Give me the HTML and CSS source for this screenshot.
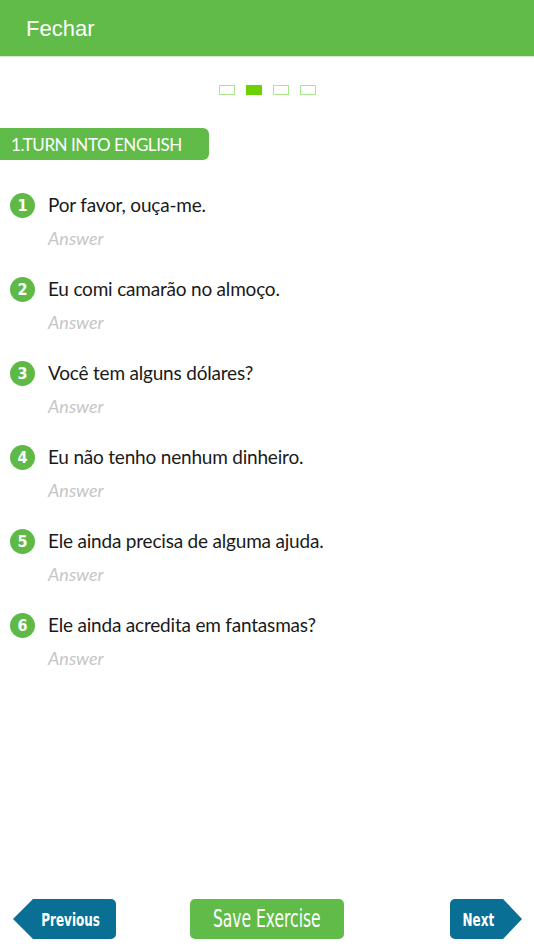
FILE: index.html
```html
<!DOCTYPE html>
<html lang="pt">
<head>
<meta charset="utf-8">
<title>Exercise</title>
<link rel="stylesheet" href="styles.css">
</head>
<body>
<div class="page">
  <header class="topbar">
    <span class="close">Fechar</span>
  </header>

  <div class="pager">
    <span class="dot"></span>
    <span class="dot active"></span>
    <span class="dot"></span>
    <span class="dot"></span>
  </div>

  <div class="section-tab">1.TURN INTO ENGLISH</div>

  <ol class="questions">
    <li class="q">
      <span class="num">1</span>
      <div class="q-body">
        <div class="q-text">Por favor, ouça-me.</div>
        <div class="answer">Answer</div>
      </div>
    </li>
    <li class="q">
      <span class="num">2</span>
      <div class="q-body">
        <div class="q-text">Eu comi camarão no almoço.</div>
        <div class="answer">Answer</div>
      </div>
    </li>
    <li class="q">
      <span class="num">3</span>
      <div class="q-body">
        <div class="q-text">Você tem alguns dólares?</div>
        <div class="answer">Answer</div>
      </div>
    </li>
    <li class="q">
      <span class="num">4</span>
      <div class="q-body">
        <div class="q-text">Eu não tenho nenhum dinheiro.</div>
        <div class="answer">Answer</div>
      </div>
    </li>
    <li class="q">
      <span class="num">5</span>
      <div class="q-body">
        <div class="q-text">Ele ainda precisa de alguma ajuda.</div>
        <div class="answer">Answer</div>
      </div>
    </li>
    <li class="q">
      <span class="num">6</span>
      <div class="q-body">
        <div class="q-text">Ele ainda acredita em fantasmas?</div>
        <div class="answer">Answer</div>
      </div>
    </li>
  </ol>

  <footer class="footer">
    <div class="nav-btn prev">
      <span class="tip tip-left"></span>
      <span class="nav-body"><span class="nav-label">Previous</span></span>
    </div>
    <div class="save-btn"><span class="save-label">Save Exercise</span></div>
    <div class="nav-btn next">
      <span class="nav-body"><span class="nav-label">Next</span></span>
      <span class="tip tip-right"></span>
    </div>
  </footer>
</div>
</body>
</html>
```

FILE: styles.css
```css
html, body {
  margin: 0;
  padding: 0;
  background: #ffffff;
}

.page {
  width: 534px;
  height: 950px;
  display: flex;
  flex-direction: column;
  font-family: "Lato", "Open Sans", sans-serif;
}

.topbar {
  height: 57px;
  background: #61bb48;
  border-bottom: 1px solid #d4ecc9;
  display: flex;
  align-items: center;
  padding-left: 26px;
  box-sizing: border-box;
}

.close {
  font-family: "Liberation Sans", Arial, sans-serif;
  font-size: 22px;
  color: #ffffff;
  margin-top: 1px;
}

.pager {
  display: flex;
  justify-content: center;
  gap: 11px;
  margin-top: 28px;
  padding-left: 1px;
}

.dot {
  width: 16px;
  height: 10px;
  box-sizing: border-box;
  border: 1.5px solid #a9e68c;
  background: #ffffff;
}

.dot.active {
  background: #6ad200;
  border-color: #6ad200;
}

.section-tab {
  margin-top: 33px;
  width: 209px;
  height: 32px;
  box-sizing: border-box;
  background: #61bb48;
  border-radius: 0 6px 6px 0;
  color: #ffffff;
  font-family: "Lato", sans-serif;
  font-size: 17px;
  letter-spacing: -0.45px;
  line-height: 33px;
  padding-left: 11px;
  white-space: nowrap;
}

.questions {
  list-style: none;
  margin: 32px 0 0 0;
  padding: 0 0 0 10px;
  display: flex;
  flex-direction: column;
  gap: 14px;
}

.q {
  display: flex;
  align-items: flex-start;
  gap: 13px;
  height: 70px;
}

.num {
  width: 25px;
  height: 25px;
  flex: none;
  border-radius: 50%;
  background: #5eb946;
  color: #ffffff;
  font-family: "DejaVu Sans Condensed", "DejaVu Sans", sans-serif;
  font-stretch: condensed;
  font-weight: 700;
  font-size: 16px;
  display: flex;
  align-items: center;
  justify-content: center;
  margin-top: 1px;
}

.q-text {
  font-size: 19px;
  letter-spacing: -0.2px;
  line-height: 26px;
  color: #1a1a1a;
}

.answer {
  font-size: 18px;
  font-style: italic;
  color: #c6c6c6;
  line-height: 24px;
  margin-top: 8px;
}

.footer {
  margin-top: auto;
  height: 40px;
  margin-bottom: 11px;
  display: flex;
  align-items: stretch;
  padding: 0 12px 0 13px;
  justify-content: space-between;
}

.nav-btn {
  display: flex;
  align-items: stretch;
}

.tip {
  width: 0;
  height: 0;
  border-top: 20px solid transparent;
  border-bottom: 20px solid transparent;
}

.tip-left {
  border-right: 20px solid #0a6f95;
}

.tip-right {
  border-left: 19px solid #0a6f95;
}

.nav-body {
  background: #0a6f95;
  display: flex;
  align-items: center;
  justify-content: center;
  box-sizing: border-box;
}

.nav-label {
  color: #ffffff;
  font-family: "DejaVu Sans Condensed", "DejaVu Sans", sans-serif;
  font-stretch: condensed;
  font-weight: 700;
  font-size: 18px;
  display: inline-block;
  transform: scaleX(0.74);
}

.prev .nav-body {
  width: 83px;
  border-radius: 0 5px 5px 0;
  padding-right: 8px;
}

.next .nav-body {
  width: 53px;
  border-radius: 5px 0 0 5px;
  padding-left: 3px;
}

.save-btn {
  width: 154px;
  background: #61bb48;
  border-radius: 5px;
  display: flex;
  align-items: center;
  justify-content: center;
  margin-left: 56px;
  margin-right: 89px;
}

.save-label {
  color: #ffffff;
  font-family: "DejaVu Sans Condensed", "DejaVu Sans", sans-serif;
  font-stretch: condensed;
  font-size: 24px;
  display: inline-block;
  transform: scaleX(0.72);
}
```
